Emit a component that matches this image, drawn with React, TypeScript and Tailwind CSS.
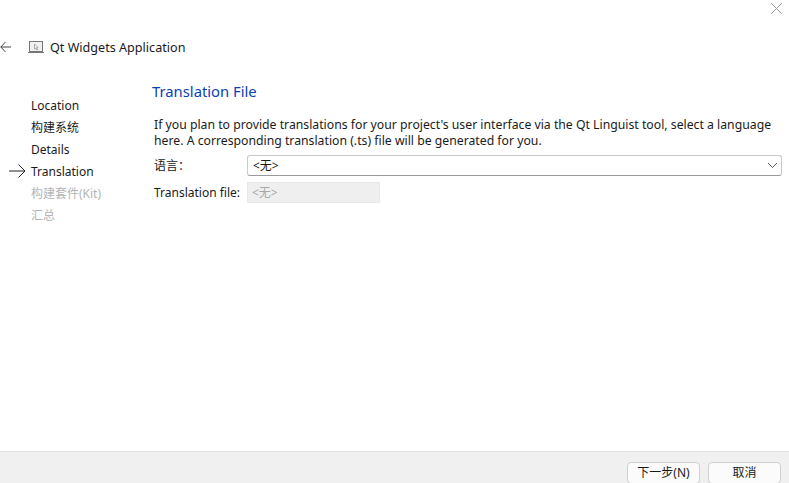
function SideItem({ label, muted }: { label: string; muted?: boolean }) {
  return (
    <div className={`h-[22px] leading-[22px] text-[12px] ${muted ? "text-[#b4b4b4]" : "text-[#1a1a1a]"}`}>{label}</div>
  );
}

function App() {
  return (
    <div className="relative flex h-[483px] w-[789px] flex-col overflow-hidden bg-white font-['Noto_Sans','Noto_Sans_CJK_SC',sans-serif] text-[#1a1a1a]">
      {/* close */}
      <div className="flex h-[16px] justify-end pr-[6px]">
        <svg width="13" height="13" viewBox="0 0 13 13" className="mt-[2px]" stroke="#9a9a9a" fill="none">
          <path d="M1 1l11 11M12 1L1 12" />
        </svg>
      </div>

      {/* title bar */}
      <div className="mt-[22px] flex h-[20px] items-center">
        <svg width="12" height="12" viewBox="0 0 12 12" fill="none" stroke="#444444" className="mt-[-2px]">
          <path d="M11 6H0.8M5.5 1L0.8 6l4.7 5" />
        </svg>
        <svg width="16" height="13" viewBox="0 0 16 13" fill="none" className="ml-[16px] mt-[-1px]">
          <rect x="1.5" y="0.5" width="13" height="10" fill="#f0f0f0" stroke="#777777" />
          <path d="M0 11.5h16" stroke="#777777" />
          <path d="M6.5 3v5l1.3-1 1 2 .8-.4-1-2H10z" fill="#ffffff" stroke="#777777" strokeWidth="0.6" />
        </svg>
        <span className="ml-[6px] text-[12.6px]">Qt Widgets Application</span>
      </div>

      <div className="flex flex-1">
        {/* steps */}
        <div className="w-[152px] pt-[37px]">
          <div className="pl-[31px]">
            <SideItem label="Location" />
            <SideItem label="构建系统" />
            <SideItem label="Details" />
            <div className="relative">
              <svg width="17" height="14" viewBox="0 0 17 14" fill="none" stroke="#222222" className="absolute left-[-22px] top-[3px]">
                <path d="M0 7h16M9.5 0.5L16 7l-6.5 6.5" />
              </svg>
              <SideItem label="Translation" />
            </div>
            <SideItem label="构建套件(Kit)" muted />
            <SideItem label="汇总" muted />
          </div>
        </div>

        {/* page */}
        <div className="flex-1 pt-[23px] pr-[7px]">
          <h1 className="h-[20px] text-[14.8px] leading-[20px] text-[#0b3fb5]">Translation File</h1>
          <p className="mt-[16px] pl-[2px] text-[12.24px] leading-[16px]">
            If you plan to provide translations for your project's user interface via the Qt Linguist tool, select a language here. A corresponding translation (.ts) file will be generated for you.
          </p>
          <div className="mt-[6px] flex items-center pl-[2px]">
            <span className="w-[93px] text-[12px]">语言：</span>
            <div className="flex h-[21px] flex-1 items-center justify-between rounded-[3px] border border-[#c8c8c8] border-b-[#9a9a9a] pl-[5px] pr-[3px] text-[12px]">
              <span>&lt;无&gt;</span>
              <svg width="11" height="7" viewBox="0 0 11 7" fill="none" stroke="#555555">
                <path d="M1 1l4.5 4.5L10 1" />
              </svg>
            </div>
          </div>
          <div className="mt-[6px] flex items-center pl-[2px]">
            <span className="w-[93px] text-[12px]">Translation file:</span>
            <div className="flex h-[21px] w-[133px] items-center border border-[#e8e8e8] bg-[#efefef] pl-[4px] text-[12px] text-[#a8a8a8]">
              &lt;无&gt;
            </div>
          </div>
        </div>
      </div>

      {/* footer */}
      <div className="flex h-[32px] items-start justify-end gap-[8px] border-t border-[#e2e2e2] bg-[#f0f0f0] pr-[8px] pt-[10px]">
        <button className="h-[22px] w-[73px] rounded-[4px] border border-[#d0d0d0] bg-[#fbfbfb] text-[12px] leading-[20px]">下一步(N)</button>
        <button className="h-[22px] w-[73px] rounded-[4px] border border-[#d0d0d0] bg-[#fbfbfb] text-[12px] leading-[20px]">取消</button>
      </div>
    </div>
  );
}

export default App;
